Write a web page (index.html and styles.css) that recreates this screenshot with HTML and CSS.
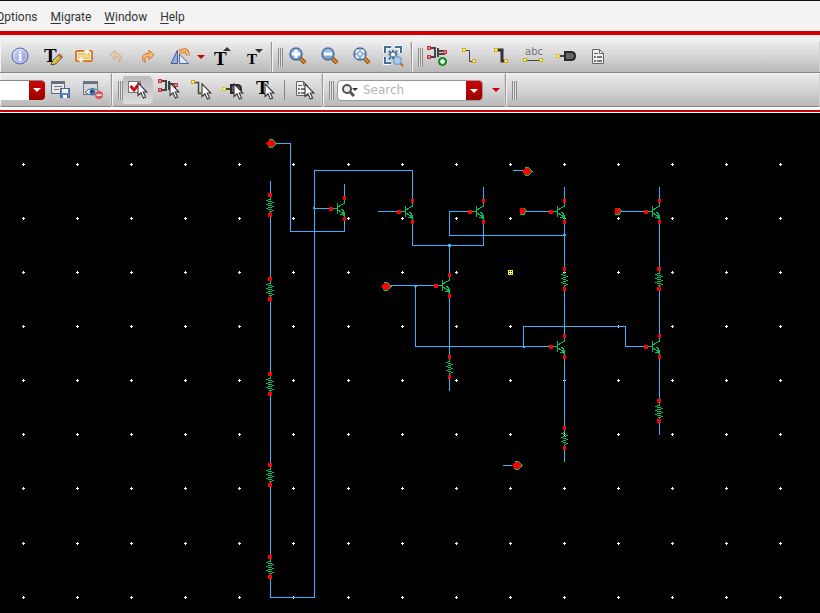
FILE: index.html
```
<!DOCTYPE html>
<html lang="en">
<head>
<meta charset="utf-8">
<title>Schematic Editor</title>
<link rel="stylesheet" href="styles.css">
</head>
<body>
<svg class="defs" aria-hidden="true">
  <defs>
    <linearGradient id="blue" x1="0" y1="0" x2="1" y2="1"><stop offset="0" stop-color="#d3dcf7"/><stop offset="1" stop-color="#8094d4"/></linearGradient>
    <linearGradient id="lens" x1="0" y1="0" x2="0" y2="1"><stop offset="0" stop-color="#a9c6e4"/><stop offset="1" stop-color="#6d9ccc"/></linearGradient>
    <symbol id="cursor" viewBox="0 0 12 19" overflow="visible"><path d="M1 1v14l3.300-3 2.700 6 2.500-1.200-2.700-5.600h4z" fill="#fff" stroke="#333" stroke-width="1.200"/></symbol>
    <symbol id="redo" viewBox="0 0 14 15" overflow="visible"><path d="M4.500 13.500C-.500 11 .500 4 8 4.500V1l5 5-5 4.500V7.500C4 7 3 10 4.500 13.500z" fill="#f6b873" stroke="#c9742b"/></symbol>
    <symbol id="glass" viewBox="0 0 18 18" overflow="visible"><path d="M11 11l5 5" stroke="#8b4a12" stroke-width="4"/><path d="M11 11l5 5" stroke="#e08a38" stroke-width="2"/><circle cx="7" cy="7" r="6" fill="url(#lens)" stroke="#4d7299" stroke-width="1.500"/></symbol>
    <symbol id="inst" viewBox="0 0 20 14" overflow="visible"><path d="M4 2h4v9H4M11 2v9M11 5h7M11 8h7" fill="none" stroke="#454545" stroke-width="2"/><path d="M0 0h4v4H0zM0 9h4v4H0zM16 4h4v4h-4z" fill="#c33941"/><path d="M1 1h2v2H1zM1 10h2v2H1zM17 5h2v2h-2z" fill="#ed8085"/></symbol>
    <symbol id="pin" viewBox="0 0 20 10" overflow="visible"><path d="M2 5h9" stroke="#444" stroke-width="2"/><path d="M9 1h6q4 0 4 4t-4 4H9z" fill="#666" stroke="#292929" stroke-width="2"/><path d="M0 3h4v4H0z" fill="#dcc51c"/><path d="M1 4h2v2H1z" fill="#fff58c"/></symbol>
    <symbol id="props" viewBox="0 0 14 15" overflow="visible"><path d="M1.500 .500h7l4 4v10h-11z" fill="#f0f0f0" stroke="#666"/><path d="M8.500 .500v4h4M3 4.500h4" fill="none" stroke="#666"/><path d="M3 7h2v2H3zM3 11h2v2H3zM6 7h5v2H6zM6 11h5v2H6z" fill="#777"/></symbol>
    <symbol id="ends" viewBox="0 0 14 15" overflow="visible"><path d="M0 0h4v4H0zM10 11h4v4h-4z" fill="#c9ae18"/><path d="M1 1h2v2H1zM11 12h2v2h-2z" fill="#fff36c"/></symbol>
    <symbol id="down" viewBox="0 0 8 5" overflow="visible"><path d="M0 0h8L4 4z"/></symbol>
  </defs>
</svg>

<nav class="menu" aria-label="Main">
  <button><u>O</u>ptions</button>
  <button><u>M</u>igrate</button>
  <button><u>W</u>indow</button>
  <button><u>H</u>elp</button>
</nav>

<div class="bar bar-top" role="toolbar" aria-label="Edit">
  <div class="group first">
    <button class="tool" aria-label="Properties"><svg><circle cx="16" cy="14" r="8" fill="url(#blue)" stroke="#576cae"/><circle cx="16" cy="14" r="6.500" fill="none" stroke="#fff" opacity=".5"/><text x="14" y="19" class="glyph info">i</text></svg></button>
    <button class="tool" aria-label="Edit text"><svg><text x="8" y="20" class="glyph">T</text><path d="M15 23l1.500-4 7-7 3 3-7 7z" fill="#f2d64e" stroke="#55401c"/><path d="M21.500 13.500l2-2 3 3-2 2z" fill="#c8655d"/><path d="M17.500 21.500l6-6" stroke="#b98a12"/></svg></button>
    <button class="tool" aria-label="Replace"><svg><rect x="8" y="9" width="16" height="10" rx="1" fill="#fff" stroke="#d9792e" stroke-width="2"/><rect x="10.500" y="11.500" width="11" height="5" fill="#f4d58a" stroke="#e9bc60"/><path d="M18 6l4 3.500-4 3.500v-2.500h-2v-2h2zM14 14l-4 3.500 4 3.500v-2.500h2v-2h-2z" fill="#fff" stroke="#f3cf94" stroke-width=".5"/></svg></button>
    <button class="tool" aria-label="Undo" disabled><svg><g transform="translate(23 7) scale(-1 1)" opacity=".4"><use href="#redo" width="14" height="15"/></g></svg></button>
    <button class="tool" aria-label="Redo"><svg><use href="#redo" x="9" y="7" width="14" height="15"/></svg></button>
    <button class="tool" aria-label="Flip"><svg><path d="M7 21.500L13.500 8v13.500z" fill="#94a9dc" stroke="#40629c"/><path d="M15.500 12v9.500h9z" fill="#e2eaf8" stroke="#526da5"/><path d="M17 9.500q6-4 7 4" fill="none" stroke="#c66f29" stroke-width="4"/><path d="M17 9.500q6-4 7 4" fill="none" stroke="#ffc989" stroke-width="2"/><path d="M15 6v6h6z" fill="#f0a254"/></svg></button>
    <button class="drop" aria-label="Flip options"><svg><use href="#down" x="1" y="13" width="8" height="5" fill="#c00"/></svg></button>
    <button class="tool" aria-label="Larger text"><svg><text x="8" y="23" class="glyph">T</text><path d="M17 9l4-4 4 4z" fill="#333"/></svg></button>
    <button class="tool" aria-label="Smaller text"><svg><text x="9" y="22" class="glyph small">T</text><path d="M17 7h8l-4 4z" fill="#333"/></svg></button>
  </div>
  <div class="group">
    <i class="grip"></i>
    <button class="tool" aria-label="Zoom in"><svg><use href="#glass" x="8" y="5" width="18" height="18"/><path d="M11 12h8M15 8v8" stroke="#fff" stroke-width="3"/></svg></button>
    <button class="tool" aria-label="Zoom out"><svg><use href="#glass" x="8" y="5" width="18" height="18"/><path d="M11 12h8" stroke="#fff" stroke-width="3"/></svg></button>
    <button class="tool" aria-label="Zoom to fit"><svg><use href="#glass" x="8" y="5" width="18" height="18"/><path d="M11.500 11V8.500H14M16 8.500h2.500V11M18.500 13v2.500H16M14 15.500h-2.500V13" fill="none" stroke="#fff" stroke-width="1.500"/><circle cx="15" cy="12" r="1.500" fill="#fff"/></svg></button>
    <button class="tool" aria-label="Zoom to selection"><svg><path d="M8 11V5h6M18 5h6v6M8 15v6h6" fill="none" stroke="#f4f9ff" stroke-width="4"/><path d="M8 11V5h6M18 5h6v6M8 15v6h6M12 9l2 2M20 9l-2 2M12 17l2-2" fill="none" stroke="#456f9b" stroke-width="2"/><path d="M16 8v9M11.500 12.500h9" stroke="#456f9b" stroke-width="2"/><circle cx="16" cy="12.500" r="2.500" fill="#fff" stroke="#456f9b"/><path d="M22 20l4 4" stroke="#b86b25" stroke-width="2"/><circle cx="20.500" cy="18.500" r="4" fill="#a9cdef" stroke="#5c8fc2"/></svg></button>
  </div>
  <div class="group last">
    <i class="grip"></i>
    <button class="tool" aria-label="Create instance"><svg><use href="#inst" x="6" y="4" width="20" height="14"/><circle cx="21.500" cy="19.500" r="4" fill="#16a527" stroke="#08731a"/><path d="M19 19.500h5M21.500 17v5" stroke="#fff" stroke-width="2"/></svg></button>
    <button class="tool" aria-label="Create wire"><svg><path d="M13 8.500h3.500v11H20" fill="none" stroke="#444"/><use href="#ends" x="9" y="6" width="14" height="15"/></svg></button>
    <button class="tool" aria-label="Create wide wire"><svg><path d="M12 8h5v11h4" fill="none" stroke="#333" stroke-width="3"/><use href="#ends" x="9" y="6" width="14" height="15"/></svg></button>
    <button class="tool" aria-label="Create label"><svg><text x="8" y="13" class="abc">abc</text><path d="M9 18.500h14" stroke="#444"/><path d="M6 16h4v4H6zM22 16h4v4h-4z" fill="#c9ae18"/><path d="M7 17h2v2H7zM23 17h2v2h-2z" fill="#fff36c"/></svg></button>
    <button class="tool" aria-label="Create pin"><svg><use href="#pin" x="7" y="9" width="20" height="10"/></svg></button>
    <button class="tool" aria-label="Object options"><svg><use href="#props" x="10" y="7" width="14" height="15"/></svg></button>
  </div>
</div>

<div class="bar bar-bottom" role="toolbar" aria-label="Select">
  <div class="group first">
    <div class="combo"><select aria-label="Workspace"><option></option></select><svg class="cap"><use href="#down" x="4" y="7" width="8" height="5" fill="#fff"/></svg></div>
    <button class="tool" aria-label="Save workspace"><svg><rect x="5.500" y="6.500" width="13" height="12" fill="#e9eaec" stroke="#66717d"/><path d="M5 8h14" stroke="#66717d" stroke-width="2"/><path d="M8 11.500h8M8 14.500h5" stroke="#777"/><rect x="14.500" y="13.500" width="9" height="9" fill="#6581bd" stroke="#4b639a"/><path d="M16 14h6v4h-6zM17 20h4v3h-4z" fill="#f4f6fa"/></svg></button>
    <button class="tool" aria-label="Hide workspace"><svg><rect x="5.500" y="6.500" width="14" height="13" fill="#d5d7da" stroke="#707984"/><path d="M5 8h15" stroke="#66717d" stroke-width="2"/><path d="M7 17q7-7 15 0q-8 6-15 0z" fill="#edf3fa" stroke="#4e6789"/><circle cx="14.500" cy="17" r="3" fill="#4070ad"/><circle cx="14" cy="16.500" r="1" fill="#123"/><circle cx="21" cy="20" r="4" fill="#dd5454"/><path d="M18.500 20h5" stroke="#fff" stroke-width="1.500"/></svg></button>
  </div>
  <div class="group">
    <i class="grip"></i>
    <button class="tool on" aria-label="Select all types" aria-pressed="true"><svg><rect x="7.500" y="6.500" width="12" height="11" fill="#fff" stroke="#777"/><path d="M9.500 11l3.500 4 6-7" fill="none" stroke="#d20d16" stroke-width="3"/><use href="#cursor" x="16" y="7" width="11" height="17"/></svg></button>
    <button class="tool" aria-label="Select instances"><svg><use href="#inst" x="5" y="4" width="20" height="14"/><use href="#cursor" x="16" y="7" width="11" height="17"/></svg></button>
    <button class="tool" aria-label="Select wires"><svg><path d="M10 7.500h3.500v11H17" fill="none" stroke="#444" stroke-width="1.500"/><use href="#ends" x="6" y="5" width="14" height="15"/><use href="#cursor" x="16" y="8" width="11" height="17"/></svg></button>
    <button class="tool" aria-label="Select pins"><svg><use href="#pin" x="5" y="9" width="20" height="10"/><use href="#cursor" x="16" y="8" width="11" height="17"/></svg></button>
    <button class="tool" aria-label="Select labels"><svg><text x="7" y="19" class="glyph">T</text><use href="#cursor" x="15" y="8" width="11" height="17"/></svg></button>
    <i class="rule"></i>
    <button class="tool" aria-label="Select by property"><svg><use href="#props" x="7" y="6" width="14" height="15"/><use href="#cursor" x="16" y="8" width="11" height="17"/></svg></button>
  </div>
  <div class="group">
    <i class="grip"></i>
    <div class="search">
      <svg class="find"><circle cx="8" cy="8" r="4" fill="#eee" stroke="#555" stroke-width="2"/><path d="M11 11l4 4" stroke="#555" stroke-width="3"/><path d="M13 7h6l-3 3z" fill="#333"/></svg>
      <input type="text" placeholder="Search" aria-label="Search">
      <button class="cap" aria-label="Search history"><svg><use href="#down" x="4" y="8" width="8" height="5" fill="#fff"/></svg></button>
    </div>
    <button class="drop wide" aria-label="Search options"><svg><use href="#down" x="9" y="13" width="8" height="5" fill="#c00"/></svg></button>
  </div>
  <div class="group last"><i class="grip"></i></div>
</div>

<main class="canvas">
  <svg class="schematic" role="img" aria-label="Transistor schematic">
    <defs>
      <path id="dots" d="M22 0h3M76 0h3M130 0h3M184 0h3M238 0h3M292 0h3M347 0h3M401 0h3M455 0h3M509 0h3M563 0h3M617 0h3M671 0h3M725 0h3M779 0h3M23.500-1.500v3M77.500-1.500v3M131.500-1.500v3M185.500-1.500v3M239.500-1.500v3M293.500-1.500v3M348.500-1.500v3M402.500-1.500v3M456.500-1.500v3M510.500-1.500v3M564.500-1.500v3M618.500-1.500v3M672.500-1.500v3M726.500-1.500v3M780.500-1.500v3"/>
      <g id="res">
        <path class="part" d="M.500 4v2M-2 6.500h3M-4 7.500h2M-2 8.500h4M2 9.500h2M-2 10.500h4M-4 11.500h2M-2 12.500h4M2 13.500h2M-2 14.500h4M-4 15.500h2M-2 16.500h4M2 17.500h2M-1 18.500h3M.500 19v2"/>
        <path class="node" d="M-2 0h4v4h-4zM-2 20h4v4h-4z"/>
      </g>
      <g id="res-slim">
        <path class="part" d="M.500 4v2M-1 6.500h2M-3 7.500h2M-1 8.500h3M2 9.500h2M-1 10.500h3M-3 11.500h2M-1 12.500h3M2 13.500h2M-1 14.500h3M-3 15.500h2M-1 16.500h3M2 17.500h2M0 18.500h2M.500 19v2"/>
        <path class="node" d="M-1 0h3v4h-3zM-1 20h3v4h-3z"/>
      </g>
      <g id="npn">
        <path class="part" d="M-4 .500h4M.500-5v11M1-1.500h2M2-2.500h2M4-3.500h2M6-4.500h2M7.500-8v4M1 2.500h2M2 3.500h2M4 4.500h4M4 1.500h2M5.500 1v2M6.500 2v6M7.500 4v5M5 5.500h2M3 6.500h3"/>
        <path class="node" d="M6-12h3v4H6zM6 9h3v4H6zM-8-1h4v4h-4z"/>
      </g>
      <g id="port">
        <path class="rim" d="M-2-4h4v1h1v1h1v1h1v1h1v1H5v1H4v1H3v1H2v1h-4V4h-1V3h5v-6h-5z"/>
        <path class="node" d="M-2-3h4v1h1v1h1v3H3v1H2v1h-4V3h-1V2h-1V1h-1v-1h1v-1h1v-1h1z"/>
      </g>
      <g id="tag"><path class="rim" d="M0-3h5v1h1v1h1v2H6v1H5v2H0z"/><path class="node" d="M0-3h4v1h1v1h1v1H5v2H4v1H0z"/></g>
    </defs>
    <g transform="translate(0 -113)">
      <g class="dots">
        <use href="#dots" y="164.500"/><use href="#dots" y="218.500"/><use href="#dots" y="272.500"/><use href="#dots" y="326.500"/><use href="#dots" y="380.500"/><use href="#dots" y="434.500"/><use href="#dots" y="488.500"/><use href="#dots" y="543.500"/><use href="#dots" y="597.500"/>
      </g>
      <path class="wire" transform="translate(.5 .5)" d="M275 143H290V231H344V217M270 181V193M270 216V278M270 300V373M270 395V464M270 486V556M270 578V597H314V170H412V200M314 208H330M344 184V197M378 211H398M412 223V245H483V223M483 187V200M469 211H449V235H564M449 245V275M449 297V356M449 378V390M390 285H435M415 285V346H550M523 346V326H625V346H645M564 187V200M564 223V268M564 290V336M564 358V427M564 449V461M659 187V200M659 223V268M659 290V336M659 358V400M659 422V434M526 211H550M621 211H645M513 170H523M503 465H513"/>
      <path class="joint" d="M448 244h3v3h-3zM414 285h3v2h-3zM563 234h3v2h-3zM313 207h2v2h-2zM523 346h2v2h-2z"/>
      <use href="#res" x="270" y="193"/><use href="#res" x="270" y="277"/><use href="#res" x="270" y="372"/><use href="#res" x="270" y="463"/><use href="#res" x="270" y="555"/>
      <use href="#res-slim" x="449" y="355"/><use href="#res-slim" x="564" y="267"/><use href="#res" x="659" y="267"/><use href="#res-slim" x="564" y="426"/><use href="#res" x="659" y="399"/>
      <use href="#npn" x="337" y="208"/><use href="#npn" x="405" y="211"/><use href="#npn" x="476" y="211"/><use href="#npn" x="557" y="211"/><use href="#npn" x="652" y="211"/><use href="#npn" x="442" y="285"/><use href="#npn" x="557" y="346"/><use href="#npn" x="652" y="346"/>
      <use href="#port" x="271" y="143"/><use href="#port" x="386" y="286"/><use href="#port" x="527" y="171"/><use href="#port" x="517" y="465"/>
      <use href="#tag" x="520" y="211"/><use href="#tag" x="615" y="211"/>
      <path d="M508 270h5v5h-5z" fill="#ff0"/><path d="M509 271h3v3h-3z"/><path d="M509 272.500h3M510.500 271v3" stroke="#ffffb0"/>
    </g>
  </svg>
</main>
</body>
</html>
```

FILE: styles.css
```
* { box-sizing: border-box; }
body {
  margin: 0;
  height: 100vh;
  display: flex;
  flex-direction: column;
  overflow: hidden;
  background: #efefef;
  font: 12px/16px Roboto, "Liberation Sans", sans-serif;
  color: #333;
}
button { font: inherit; color: inherit; border: 0; padding: 0; background: none; }
svg { display: block; overflow: visible; }
.defs { width: 0; height: 0; position: absolute; }

.menu {
  display: flex;
  gap: 13px;
  height: 35px;
  padding-top: 2px;
  padding-left: 0;
  border-top: 1px solid #111;
  border-bottom: 4px solid #d40000;
  background: #f3f3f3;
  flex: none;
}
.menu button:first-child { margin-left: -4px; }
.menu u { text-underline-offset: 2px; text-decoration-skip-ink: none; }

.bar { display: flex; flex: none; }
.bar-top { padding-top: 7px; }
.bar-bottom { border-bottom: 3px solid #fff; box-shadow: 0 2px #cc0000, 0 3px #fff; margin-bottom: 3px; }
.group {
  display: flex;
  align-items: center;
  flex: none;
  border-right: 1px solid #999;
  border-bottom: 1px solid #858585;
  box-shadow: inset -1px 0 #d2d2d2, inset 1px 0 #f4f4f4;
  background: linear-gradient(#ebebeb, #d6d6d6 45%, #b9b9b9);
  padding-right: 2px;
}
.bar-top .group { height: 31px; }
.bar-bottom .group { height: 34px; border-top: 1px solid #f3f3f3; border-radius: 0 0 2px 2px; }
.group.last { flex: 1; border-right: 0; }
.bar-top .first { padding-left: 4px; padding-right: 1px; }
.bar-bottom .first { padding-right: 1px; }

.grip {
  width: 5px;
  height: 19px;
  margin: 0 -2px 0 6px;
  background: repeating-linear-gradient(90deg, #8b8b8b 0 1px, #e2e2e2 1px 2px);
}
.rule { width: 1px; height: 20px; margin: 0 3px; background: #858585; }
.tool { width: 32px; height: 30px; flex: none; }
.tool svg { width: 32px; height: 30px; }
.on { border-radius: 7px; background: linear-gradient(#bcbcbc, #dcdcdc) 2px 1px / 30px 28px no-repeat; }
.drop { width: 10px; height: 30px; }
.drop svg { width: 10px; height: 30px; }
.wide { width: 20px; }
.glyph { font: bold 19px "Liberation Serif", serif; fill: #000; }
.small { font-size: 15px; }
.info { font-size: 15px; fill: #fff; }
.abc { font: 10px "DejaVu Sans", sans-serif; fill: #777; }

.combo { display: flex; width: 45px; height: 20px; margin-right: 1px; border-radius: 0 4px 4px 0; overflow: hidden; border-top: 1px solid #888; }
.combo select { appearance: none; border: 0; width: 29px; background: #fff; }
.cap { width: 16px; height: 20px; flex: none; background: linear-gradient(#cc0505, #970000); }
.search {
  display: flex;
  width: 146px;
  height: 21px;
  margin-left: 5px;
  background: #fff;
  border: 1px solid #999;
  border-radius: 4px;
  overflow: hidden;
}
.find { width: 24px; height: 19px; flex: none; margin-left: 1px; }
.search input { border: 0; outline: 0; padding: 0; width: 0; flex: 1; background: none; font: 12px "DejaVu Sans", sans-serif; }
.search input::placeholder { color: #b4b4b4; }

.canvas { flex: 1; min-height: 0; background: #000; overflow: hidden; }
.schematic { width: 100%; height: 100%; shape-rendering: crispEdges; }
.dots { stroke: #fff; }
.wire { fill: none; stroke: #36b4ff; stroke-linecap: square; }
.joint { fill: #36b4ff; }
.part { fill: none; stroke: #00c060; }
.rim { fill: #00c060; }
.node { fill: #f00; }
```
